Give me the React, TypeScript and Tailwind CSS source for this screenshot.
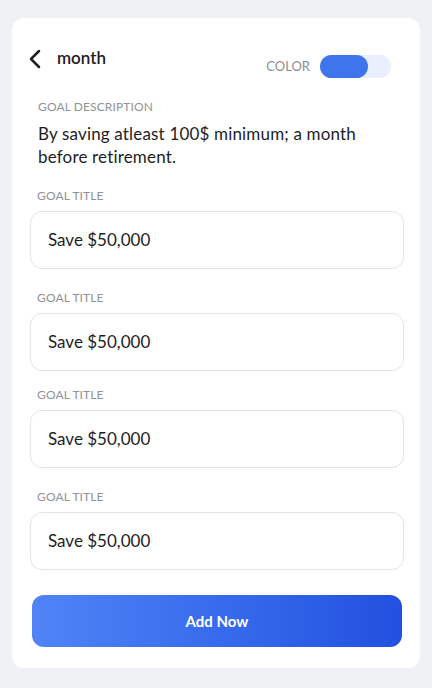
const goals = [
  { id: 1, labelMt: 'mt-[20px]' },
  { id: 2, labelMt: 'mt-[21px]' },
  { id: 3, labelMt: 'mt-[16px]' },
  { id: 4, labelMt: 'mt-[21px]' },
]

function GoalField({ labelMt }: { labelMt: string }) {
  return (
    <div className={labelMt}>
      <div className="pl-[25px] text-[12px] leading-4 tracking-[0.01em] text-[#909296]">GOAL TITLE</div>
      <div className="mt-[7px] ml-[18px] mr-[16px] flex h-[58px] items-center rounded-xl border border-[#e2e4e8] bg-white pl-[17px] text-[17px] text-[#1d1d1f]">
        Save $50,000
      </div>
    </div>
  )
}

export default function App() {
  return (
    <div className="min-h-[688px] bg-[#eff1f5] px-3 pt-[18px] font-['Lato','Noto_Sans',sans-serif]">
      <div className="rounded-xl bg-white pb-[21px] pt-[28px]">
        {/* Header */}
        <div className="flex items-start justify-between pl-[16px] pr-[29px]">
          <div className="flex h-[24px] items-center">
            <svg width="14" height="20" viewBox="0 0 14 20" fill="none" className="mt-[1px]">
              <path d="M11 2 L3 10 L11 18" stroke="#1f2022" strokeWidth="2.5" strokeLinecap="round" strokeLinejoin="round" />
            </svg>
            <span className="ml-[15px] text-[17px] font-semibold text-[#1f2022]">month</span>
          </div>
          <div className="mt-[9px] flex items-center">
            <span className="mr-[10px] text-[13px] text-[#8b8d90]">COLOR</span>
            <div className="h-[23px] w-[71px] rounded-full bg-[#e9effc]">
              <div className="h-[23px] w-[48px] rounded-full bg-[#3e74ec]"></div>
            </div>
          </div>
        </div>

        {/* Description */}
        <div className="mt-[21px] pl-[26px] text-[12px] leading-4 tracking-[0.01em] text-[#909296]">GOAL DESCRIPTION</div>
        <p className="mt-[7px] pl-[26px] pr-[40px] text-[17px] leading-[23px] tracking-[0.01em] text-[#1d1d1f]">
          By saving atleast 100$ minimum; a month before retirement.
        </p>

        {goals.map((g) => (
          <GoalField key={g.id} labelMt={g.labelMt} />
        ))}

        <button className="mt-[25px] ml-[20px] flex h-[52px] w-[370px] items-center justify-center rounded-xl bg-gradient-to-r from-[#5084f7] to-[#2250e0] text-[15px] font-bold text-white">
          Add Now
        </button>
      </div>
    </div>
  )
}
